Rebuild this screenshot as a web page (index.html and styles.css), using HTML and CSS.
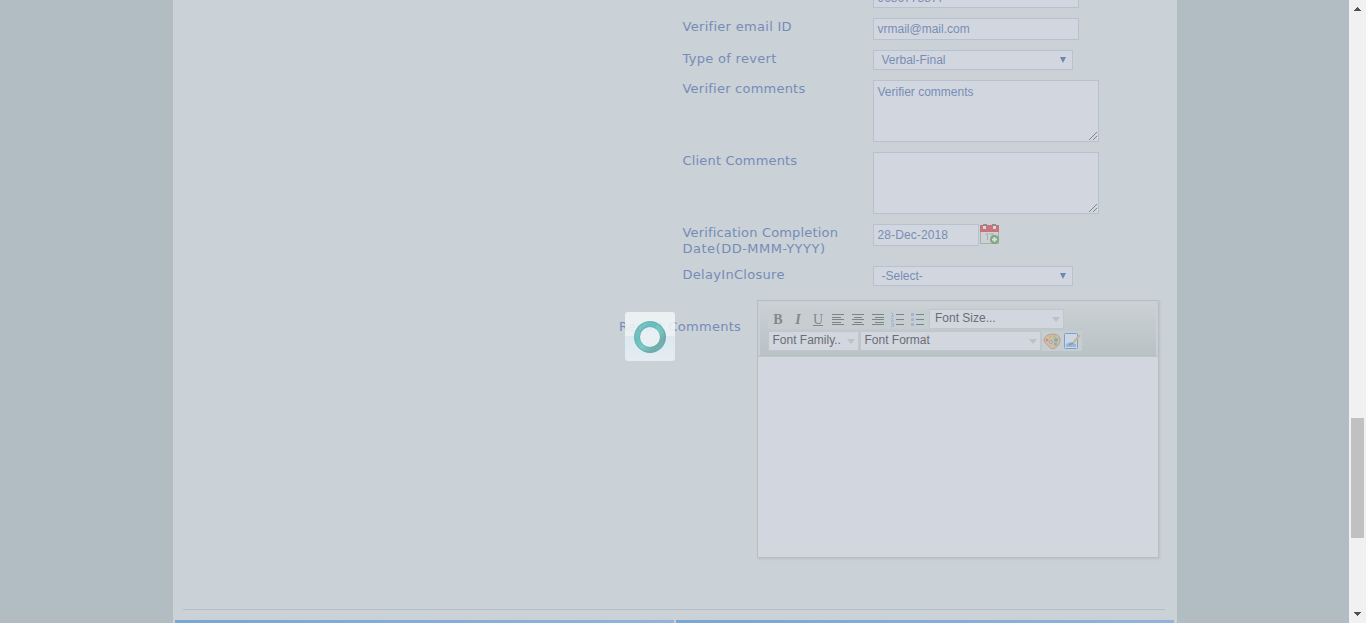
FILE: index.html
```html
<!DOCTYPE html>
<html lang="en"><head><meta charset="utf-8"><title>Verification</title><link rel="stylesheet" href="styles.css"></head>
<body>
<main class="panel">
  <form class="form">
    <div class="row"><label class="label"></label><div class="field input">9686778877</div></div>
    <div class="row"><label class="label">Verifier email ID</label><div class="field input">vrmail@mail.com</div></div>
    <div class="row"><label class="label">Type of revert</label><div class="field select"><span>Verbal-Final</span><i class="arrow"></i></div></div>
    <div class="row"><label class="label snug">Verifier comments</label><div class="field area"><span>Verifier comments</span><svg class="grip" width="8" height="8" shape-rendering="crispEdges"><path d="M0 7h1v1h-1zM1 6h1v1h-1zM2 5h1v1h-1zM3 4h1v1h-1zM4 3h1v1h-1zM5 2h1v1h-1zM6 1h1v1h-1zM7 0h1v1h-1zM4 7h1v1h-1zM5 6h1v1h-1zM6 5h1v1h-1zM7 4h1v1h-1z"/></svg></div></div>
    <div class="row"><label class="label tight">Client Comments</label><div class="field area"><span></span><svg class="grip" width="8" height="8" shape-rendering="crispEdges"><path d="M0 7h1v1h-1zM1 6h1v1h-1zM2 5h1v1h-1zM3 4h1v1h-1zM4 3h1v1h-1zM5 2h1v1h-1zM6 1h1v1h-1zM7 0h1v1h-1zM4 7h1v1h-1zM5 6h1v1h-1zM6 5h1v1h-1zM7 4h1v1h-1z"/></svg></div></div>
    <div class="row"><label class="label"><span class="tight">Verification Completion</span><br><span class="wide">Date(DD-MMM-YYYY)</span></label><div class="field date">28-Dec-2018</div>
      <svg class="calendar" width="20" height="20" viewBox="0 0 20 20"><path fill="#cdd2d4" d="M0 1h19v19H0z"/><path fill="none" stroke="#a9afb1" d="M.5 8v11.500h18V8"/><path fill="#c9747d" d="M0 1h19v7H0z"/><path fill="#8b8e91" d="M3 0h4v2H3zM12 0h4v2h-4z"/><path fill="#d8d4d8" d="M3 2h3v3H3zM13 2h3v3h-3z"/><path stroke="#b0b4b6" fill="none" stroke-width="1.300" d="M5.500 10.500l2-1V16M9.500 10h3.500l-2 6"/><circle cx="14.500" cy="15.500" r="4.500" fill="#82a582"/><path stroke="#d6e2d4" stroke-width="1.800" d="M12 15.500h5M14.500 13v5"/></svg></div>
    <div class="row"><label class="label">DelayInClosure</label><div class="field select"><span>-Select-</span><i class="arrow"></i></div></div>
  </form>
  <section class="report">
    <label class="label report-label">Report Comments</label>
    <div class="editor">
      <div class="toolbar">
        <div class="tools">
          <div class="buttons">
            <b class="tool">B</b><i class="tool">I</i><span class="tool under">U</span>
            <svg class="icon" viewBox="0 0 20 20"><path d="M4 4.500h12M4 7.500h9M4 9.500h12M4 12.500h9M4 14.500h12"/></svg>
            <svg class="icon" viewBox="0 0 20 20"><path d="M4 4.500h12M6 7.500h8M4 9.500h12M6 12.500h8M4 14.500h12"/></svg>
            <svg class="icon" viewBox="0 0 20 20"><path d="M4 4.500h12M7 7.500h9M4 9.500h12M7 12.500h9M4 14.500h12"/></svg>
            <svg class="icon" viewBox="0 0 20 20"><path d="M8 4.500h8M8 9.500h8M8 14.500h8"/><path class="mark" d="M3 3h1.500v3M3 6.500h3M3 8.500h2v1l-2 1.500h3M3 13h2.500v3.500H3M3.500 14.500h2"/></svg>
            <svg class="icon" viewBox="0 0 20 20"><path d="M8 4.500h8M8 9.500h8M8 14.500h8"/><path class="dots" d="M3 3h3v3H3zM3 8h3v3H3zM3 13h3v3H3z"/></svg>
          </div>
          <div class="drop size">Font Size...<i></i></div>
        </div>
        <div class="tools second">
          <div class="drop family">Font Family..<i></i></div>
          <div class="drop format">Font Format<i></i></div>
          <div class="images">
            <svg width="20" height="20" viewBox="0 0 20 20"><path fill="#cfbdac" stroke="#baa08c" d="M2 9C3 4 9 2 14 3.500s5 7 2 11-8 4-9 1c-1-2-5-3-5-6.500z"/><circle cx="5" cy="9" r="1.300" fill="#c58b90"/><circle cx="8" cy="5.700" r="1.500" fill="#c7ba86"/><circle cx="12.500" cy="5.500" r="1.500" fill="#bcbc82"/><circle cx="14" cy="9" r="2" fill="#7db0ba"/><circle cx="13.500" cy="13" r="1.600" fill="#8eb090"/><circle cx="9" cy="11" r="1.500" fill="#d1d4d8" stroke="#b0999a"/></svg>
            <svg width="20" height="20" viewBox="0 0 20 20"><rect x="2.500" y="2.500" width="13" height="15" rx="1" fill="#cbd7e2" stroke="#7e9fcb"/><path fill="#97b7d8" d="M4 13l4-2 6 2v3H4z"/><path stroke="#c4b797" stroke-width="2" d="M11 12l7-8"/><path stroke="#898c91" stroke-width="1.200" d="M7 14l4-2"/></svg>
          </div>
        </div>
      </div>
      <div class="canvas"></div>
    </div>
  </section>
  <hr class="rule">
  <div class="tabs"><div></div><div></div></div>
</main>
<aside class="scroll"><svg width="17" height="17" shape-rendering="crispEdges"><path d="M5 11h7v-1h-1v-1h-1V8H9V7H8v1H7v1H6v1H5z"/></svg><div class="thumb"></div><svg width="17" height="17" shape-rendering="crispEdges"><path d="M5 6h7v1h-1v1h-1v1H9v1H8V9H7V8H6V7H5z"/></svg></aside>
<div class="loader"><svg width="50" height="50" viewBox="0 0 50 50"><defs><linearGradient id="ring" x1="0" y1="0" x2="1" y2="1"><stop stop-color="#7fc8c8"/><stop offset=".3" stop-color="#5fbdb9"/><stop offset=".55" stop-color="#70cac4"/><stop offset=".8" stop-color="#6ca5a9"/><stop offset="1" stop-color="#62beb9"/></linearGradient></defs><circle cx="25" cy="25" r="13" fill="#eef5f9" stroke="url(#ring)" stroke-width="6"/><circle cx="25" cy="25" r="15.300" fill="none" stroke="#469f9e" stroke-opacity=".5"/><circle cx="25" cy="25" r="10.500" fill="none" stroke="#469f9e" stroke-opacity=".3"/></svg></div>
</body></html>
```
FILE: styles.css
```css
* { box-sizing: border-box; }
body { margin: 0; height: 623px; overflow: hidden; display: flex; background: #b2bdc3; font-family: "Liberation Sans", Arial, sans-serif; }
.panel { width: 1004px; height: 623px; margin-left: 173px; flex: none; background: #cad1d7; overflow: hidden; display: flex; flex-direction: column; }
.form { margin: -14px 0 0 510px; display: flex; flex-direction: column; gap: 10px; flex: none; }
.row { display: flex; align-items: flex-start; height: 22px; }
.row:nth-child(3), .row:nth-child(7) { height: 20px; }
.row:nth-child(4), .row:nth-child(5) { height: 62px; }
.row:nth-child(6) { height: 32px; }
.label { width: 190px; flex: none; color: #768cb7; font: 13px/16px "DejaVu Sans", Verdana, sans-serif; letter-spacing: .3px; padding-top: 1px; margin-left: -.5px; margin-right: .5px; }
.snug { letter-spacing: .23px; }
.tight { letter-spacing: .17px; }
.wide { letter-spacing: .5px; }
.field { border: 1px solid #b7c1d1; background: #d2d7df; color: #788db6; font-size: 12px; line-height: 20px; padding: 0 3.500px; }
.input { width: 206px; height: 22px; }
.row:first-child .input { line-height: 22px; }
.select { width: 200px; height: 20px; line-height: 18px; padding: 0 6px 0 7.500px; display: flex; justify-content: space-between; align-items: center; }
.arrow { border: 3px solid transparent; border-top: 6px solid #6c88b4; border-bottom: 0; }
.area { width: 226px; height: 62px; display: flex; justify-content: space-between; padding: 1px 1px 0 3.500px; }
.grip { align-self: flex-end; margin-bottom: 1px; fill: #83878c; }
.date { width: 106px; height: 22px; letter-spacing: .1px; }
.calendar { margin-left: 1px; }
.report { display: flex; margin: 14px 0 0 446px; flex: none; }
.report-label { width: 138px; padding-top: 19px; margin-left: 0; margin-right: 0; }
.editor { width: 402px; height: 258px; border: 1px solid #b8bfc3; box-shadow: 1px 1px 2px #bbc1c3; background: #d2d7df; }
.toolbar { height: 55px; border: 2px solid #c9d0d4; border-top-width: 1px; border-bottom: 1px solid #b5bec1; background: linear-gradient(#cbd1d4, #b9c2c5); padding: 7px 0 0 8px; }
.tools { display: flex; height: 20px; }
.second { margin-top: 2px; }
.buttons { display: flex; width: 161px; background: #c7ced1; color: #83888d; }
.tool { width: 20px; text-align: center; font: 14px/21px "Liberation Serif", serif; }
b.tool { font-weight: bold; }
i.tool { font-style: italic; font-weight: bold; }
.under { text-decoration: underline; }
.icon { width: 20px; height: 20px; margin-top: 1px; fill: none; stroke: #7d8387; }
.mark { stroke: #a2b5d1; }
.dots { fill: #a2b5d1; stroke: none; }
.drop { background: #d2d7df; border: 1px solid #c0c7cc; color: #696e75; font-size: 12px; line-height: 16px; padding: 0 3px 0 3.500px; height: 20px; display: flex; justify-content: space-between; }
.drop i { border: 4px solid transparent; border-top: 5px solid #bbc1c6; border-bottom: 0; margin-top: 7px; align-self: flex-start; }
.size { width: 135px; padding-left: 5px; }
.family { width: 91px; margin-right: 1px; }
.format { width: 181px; }
.images { display: flex; background: #c7ced1; margin-left: 1px; }
.canvas { border-top: 1px solid #bdc4ca; }
.rule { flex: none; width: 982px; margin: 51px 0 0 10px; border: 0; border-top: 1px solid #b7bdc0; }
.tabs { display: flex; gap: 2px; margin: 10px 3px 0 2px; height: 3px; }
.tabs div { flex: 1; background: linear-gradient(90deg, #77a6d8, #92b3db); }
.scroll { width: 17px; margin-left: auto; background: #f1f1f1; display: flex; flex-direction: column; fill: #505050; }
.thumb { width: 13px; height: 120px; background: #c1c1c1; margin: 401px 2px 68px; flex: none; }
.loader { position: absolute; left: 625px; top: 312px; width: 50px; height: 49px; border-radius: 3px; background: linear-gradient(#f0f5f7 0 50%, #e0ecf4 50%, #e8f1f6); opacity: .88; z-index: 2; }
.loader svg { display: block; }
```
